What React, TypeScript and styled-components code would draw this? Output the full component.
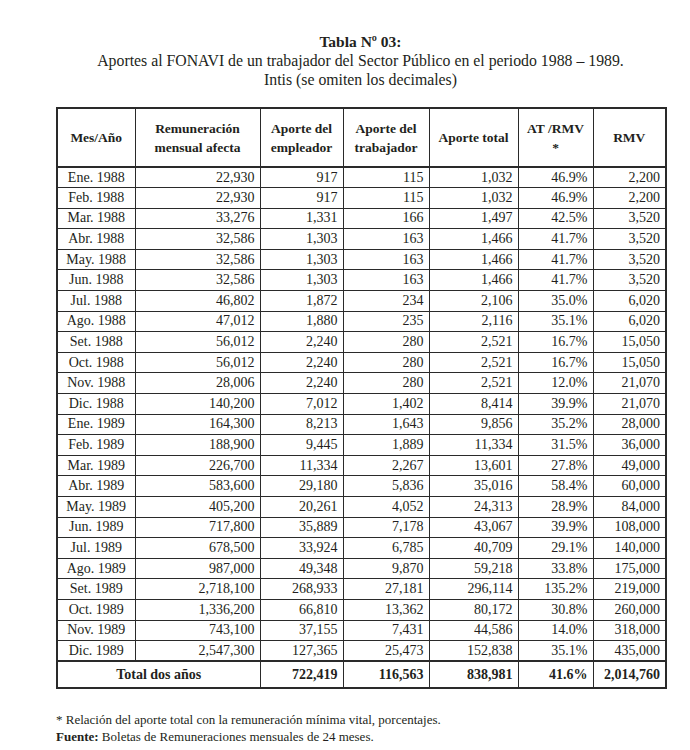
import React from "react";
import styled, { createGlobalStyle } from "styled-components";

const Global = createGlobalStyle`
  html, body { margin: 0; padding: 0; background: #ffffff; }
  body { font-family: "Liberation Serif", "DejaVu Serif", serif; color: #231f20; }
`;

const Page = styled.div`
  width: 690px;
  height: 750px;
  box-sizing: border-box;
  padding: 32px 25px 0 56px;
  display: flex;
  flex-direction: column;
`;

const Heading = styled.header`
  display: flex;
  flex-direction: column;
  align-items: center;
  text-align: center;
  line-height: 19px;
  margin-bottom: 18px;
`;

const Title = styled.div`
  font-weight: bold;
  font-size: 15.5px;
`;

const Subtitle = styled.div`
  font-size: 15.8px;
  white-space: nowrap;
`;

const Table = styled.table`
  width: 609px;
  table-layout: fixed;
  border-collapse: collapse;
  border: 2px solid #2a2a2a;
  font-size: 14px;
`;

const HeadCell = styled.th`
  border: 1px solid #2a2a2a;
  border-bottom-width: 2px;
  font-weight: bold;
  font-size: 13.5px;
  line-height: 19px;
  text-align: center;
  vertical-align: middle;
  padding: 0 4px;
`;

const HeadRow = styled.tr`
  height: 59px;
`;

const BodyRow = styled.tr`
  height: 20.6px;
`;

const Cell = styled.td<{ $align?: "left" | "center" | "right" }>`
  border: 1px solid #2a2a2a;
  text-align: ${(p) => p.$align ?? "right"};
  padding: 0 5px;
  line-height: 18px;
  white-space: nowrap;
`;

const TotalRow = styled.tr`
  height: 27px;
`;

const TotalCell = styled.td<{ $align?: "center" | "right" }>`
  border: 1px solid #2a2a2a;
  border-top-width: 2px;
  font-weight: bold;
  text-align: ${(p) => p.$align ?? "right"};
  padding: 0 5px;
  white-space: nowrap;
`;

const Notes = styled.footer`
  margin-top: 22px;
  font-size: 13px;
  line-height: 17px;
`;

const Strong = styled.span`
  font-weight: bold;
`;

const widths = [78, 125, 83, 86, 89, 75, 73];

const rows: string[][] = [
  ["Ene. 1988", "22,930", "917", "115", "1,032", "46.9%", "2,200"],
  ["Feb. 1988", "22,930", "917", "115", "1,032", "46.9%", "2,200"],
  ["Mar. 1988", "33,276", "1,331", "166", "1,497", "42.5%", "3,520"],
  ["Abr. 1988", "32,586", "1,303", "163", "1,466", "41.7%", "3,520"],
  ["May. 1988", "32,586", "1,303", "163", "1,466", "41.7%", "3,520"],
  ["Jun. 1988", "32,586", "1,303", "163", "1,466", "41.7%", "3,520"],
  ["Jul. 1988", "46,802", "1,872", "234", "2,106", "35.0%", "6,020"],
  ["Ago. 1988", "47,012", "1,880", "235", "2,116", "35.1%", "6,020"],
  ["Set. 1988", "56,012", "2,240", "280", "2,521", "16.7%", "15,050"],
  ["Oct. 1988", "56,012", "2,240", "280", "2,521", "16.7%", "15,050"],
  ["Nov. 1988", "28,006", "2,240", "280", "2,521", "12.0%", "21,070"],
  ["Dic. 1988", "140,200", "7,012", "1,402", "8,414", "39.9%", "21,070"],
  ["Ene. 1989", "164,300", "8,213", "1,643", "9,856", "35.2%", "28,000"],
  ["Feb. 1989", "188,900", "9,445", "1,889", "11,334", "31.5%", "36,000"],
  ["Mar. 1989", "226,700", "11,334", "2,267", "13,601", "27.8%", "49,000"],
  ["Abr. 1989", "583,600", "29,180", "5,836", "35,016", "58.4%", "60,000"],
  ["May. 1989", "405,200", "20,261", "4,052", "24,313", "28.9%", "84,000"],
  ["Jun. 1989", "717,800", "35,889", "7,178", "43,067", "39.9%", "108,000"],
  ["Jul. 1989", "678,500", "33,924", "6,785", "40,709", "29.1%", "140,000"],
  ["Ago. 1989", "987,000", "49,348", "9,870", "59,218", "33.8%", "175,000"],
  ["Set. 1989", "2,718,100", "268,933", "27,181", "296,114", "135.2%", "219,000"],
  ["Oct. 1989", "1,336,200", "66,810", "13,362", "80,172", "30.8%", "260,000"],
  ["Nov. 1989", "743,100", "37,155", "7,431", "44,586", "14.0%", "318,000"],
  ["Dic. 1989", "2,547,300", "127,365", "25,473", "152,838", "35.1%", "435,000"],
];

export default function App() {
  return (
    <>
      <Global />
      <Page>
        <Heading>
          <Title>Tabla Nº 03:</Title>
          <Subtitle>Aportes al FONAVI de un trabajador del Sector Público en el periodo 1988 – 1989.</Subtitle>
          <Subtitle>Intis (se omiten los decimales)</Subtitle>
        </Heading>
        <Table>
          <colgroup>
            {widths.map((w, i) => (
              <col key={i} style={{ width: w }} />
            ))}
          </colgroup>
          <thead>
            <HeadRow>
              <HeadCell>Mes/Año</HeadCell>
              <HeadCell>Remuneración<br />mensual afecta</HeadCell>
              <HeadCell>Aporte del<br />empleador</HeadCell>
              <HeadCell>Aporte del<br />trabajador</HeadCell>
              <HeadCell>Aporte total</HeadCell>
              <HeadCell>AT /RMV<br />*</HeadCell>
              <HeadCell>RMV</HeadCell>
            </HeadRow>
          </thead>
          <tbody>
            {rows.map((r) => (
              <BodyRow key={r[0]}>
                {r.map((v, i) => (
                  <Cell key={i} $align={i === 0 ? "center" : "right"}>{v}</Cell>
                ))}
              </BodyRow>
            ))}
            <TotalRow>
              <TotalCell colSpan={2} $align="center">Total dos años</TotalCell>
              <TotalCell>722,419</TotalCell>
              <TotalCell>116,563</TotalCell>
              <TotalCell>838,981</TotalCell>
              <TotalCell>41.6%</TotalCell>
              <TotalCell>2,014,760</TotalCell>
            </TotalRow>
          </tbody>
        </Table>
        <Notes>
          <div>* Relación del aporte total con la remuneración mínima vital, porcentajes.</div>
          <div><Strong>Fuente:</Strong> Boletas de Remuneraciones mensuales  de 24 meses.</div>
        </Notes>
      </Page>
    </>
  );
}
